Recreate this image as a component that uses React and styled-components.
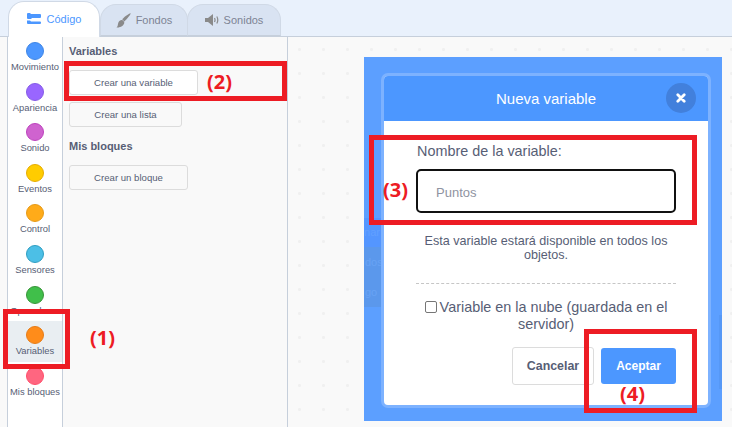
import React from 'react';
import styled, { createGlobalStyle } from 'styled-components';

const Global = createGlobalStyle`
  html, body { margin: 0; padding: 0; width: 732px; height: 427px; overflow: hidden; background: #f9f9f9; }
  * { box-sizing: border-box; }
  #root { font-family: "Liberation Sans", Arial, sans-serif; color: #575e75; }
`;

const Page = styled.div`
  position: relative;
  width: 732px;
  height: 427px;
  display: flex;
  flex-direction: column;
  overflow: hidden;
`;

const TabBar = styled.div`
  height: 37px;
  flex: none;
  display: flex;
  align-items: flex-end;
  padding-left: 8px;
  background: #e9f1fc;
  border-bottom: 1px solid #c6cfdb;
`;

const Tab = styled.div`
  height: ${p => (p.$active ? 36 : 32)}px;
  width: ${p => p.$w}px;
  margin-left: ${p => p.$ml || 0}px;
  margin-bottom: ${p => (p.$active ? -1 : 0)}px;
  display: flex;
  align-items: center;
  justify-content: center;
  gap: ${p => p.$gap}px;
  padding-bottom: ${p => (p.$active ? 2 : 0)}px;
  font-size: 11px;
  color: ${p => (p.$active ? '#4c97ff' : '#7d8494')};
  background: ${p => (p.$active ? '#fff' : '#d9e3f2')};
  border: 1px solid #d0d9e6;
  border-bottom: ${p => (p.$active ? 'none' : '1px solid #c6cfdb')};
  border-radius: 16px 16px 0 0;
  z-index: ${p => (p.$active ? 2 : 1)};
`;

const Main = styled.div`
  flex: 1;
  display: flex;
  min-height: 0;
  padding-left: 7px;
`;

const Categories = styled.div`
  width: 56px;
  flex: none;
  background: #fff;
  border-left: 1px solid #c6cfdb;
  border-right: 1px solid #c6cfdb;
  display: flex;
  flex-direction: column;
`;

const Category = styled.div`
  height: 40.6px;
  flex: none;
  display: flex;
  flex-direction: column;
  align-items: center;
  padding-top: 5px;
  font-size: 9.4px;
  line-height: 12px;
  white-space: nowrap;
  background: ${p => (p.$selected ? '#e9eef2' : 'transparent')};
`;

const Dot = styled.span`
  width: 18px;
  height: 18px;
  flex: none;
  margin-bottom: 1px;
  border-radius: 50%;
  background: ${p => p.$color};
  border: 1px solid ${p => p.$edge};
`;

const Palette = styled.div`
  width: 225px;
  flex: none;
  background: #f9f9f9;
  border-right: 1px solid #c6cfdb;
  display: flex;
  flex-direction: column;
  align-items: flex-start;
  padding: 8px 0 0 6px;
`;

const Heading = styled.div`
  font-size: 11px;
  font-weight: bold;
  line-height: 13px;
  margin-bottom: ${p => p.$mb}px;
`;

const PaletteButton = styled.div`
  width: ${p => p.$w}px;
  height: 25px;
  margin-bottom: ${p => p.$mb}px;
  display: flex;
  align-items: center;
  justify-content: center;
  font-size: 9.6px;
  background: ${p => (p.$white ? '#fff' : '#f9f9f9')};
  border: 1px solid #dcdcdc;
  border-radius: 3px;
`;

const Workspace = styled.div`
  flex: 1;
  background-color: #f9f9f9;
  background-image: radial-gradient(circle at 11.5px 12.5px, #f0f0f0 1.2px, transparent 1.7px);
  background-size: 24px 24px;
`;

const Overlay = styled.div`
  position: absolute;
  left: 364px;
  top: 57px;
  width: 358px;
  height: 364px;
  background: #5c9fff;
  padding: 16px 0 0 17px;
`;

const Ghost = styled.div`
  position: absolute;
  left: 0;
  top: ${p => p.$top}px;
  width: 18px;
  height: ${p => p.$h}px;
  background: ${p => p.$bg};
  color: ${p => p.$fg};
  font-size: 11px;
  line-height: ${p => p.$h}px;
  text-indent: ${p => p.$indent}px;
  overflow: hidden;
  white-space: nowrap;
`;

const SideShade = styled.div`
  position: absolute;
  right: 0;
  top: 258px;
  width: 3px;
  height: 74px;
  background: #5698f6;
`;

const Modal = styled.div`
  position: relative;
  width: 330px;
  height: 335px;
  border: 3px solid #7db2ff;
  border-radius: 7px;
  background: #fff;
  overflow: hidden;
  display: flex;
  flex-direction: column;
`;

const ModalHeader = styled.div`
  height: 45px;
  flex: none;
  position: relative;
  background: #4c97ff;
  color: #fff;
  font-size: 15px;
  display: flex;
  align-items: center;
  justify-content: center;
`;

const Close = styled.div`
  position: absolute;
  right: 12px;
  top: 7px;
  width: 30px;
  height: 30px;
  border-radius: 50%;
  background: #4280dc;
  display: flex;
  align-items: center;
  justify-content: center;
`;

const ModalBody = styled.div`
  flex: 1;
  display: flex;
  flex-direction: column;
  padding: 21px 32px 0;
  position: relative;
`;

const FieldLabel = styled.div`
  font-size: 14.4px;
  line-height: 18px;
  margin-bottom: 9px;
  padding-left: 1px;
`;

const Input = styled.div`
  height: 44px;
  border: 2px solid #111;
  border-radius: 5px;
  padding: 2px 0 0 18px;
  display: flex;
  align-items: center;
  font-size: 13px;
  color: #8f93a1;
`;

const Help = styled.div`
  font-size: 12.6px;
  line-height: 14px;
  text-align: center;
  margin: 21px -2px 0;
`;

const Divider = styled.div`
  border-top: 1px dashed #c6c6c6;
  margin-top: 21px;
`;

const Cloud = styled.div`
  font-size: 14.4px;
  line-height: 17px;
  text-align: center;
  margin-top: 15px;
`;

const Box = styled.span`
  display: inline-block;
  width: 12px;
  height: 12px;
  margin: 0 3px 0 0;
  vertical-align: -1px;
  border: 1px solid #767676;
  border-radius: 2px;
  background: #fff;
`;

const Actions = styled.div`
  display: flex;
  justify-content: flex-end;
  align-items: center;
  gap: 7px;
  margin-top: 14px;
`;

const Cancel = styled.div`
  width: 82px;
  height: 38px;
  display: flex;
  align-items: center;
  justify-content: center;
  font-size: 12.4px;
  font-weight: bold;
  background: #fff;
  border: 1px solid #dcdcdc;
  border-radius: 3px;
`;

const Accept = styled.div`
  width: 75px;
  height: 36px;
  display: flex;
  align-items: center;
  justify-content: center;
  font-size: 12px;
  font-weight: bold;
  color: #fff;
  background: #4c97ff;
  border-radius: 3px;
`;

const Mark = styled.div`
  position: absolute;
  left: ${p => p.$x}px;
  top: ${p => p.$y}px;
  width: ${p => p.$w}px;
  height: ${p => p.$h}px;
  border: 5px solid #ed1c24;
`;

const MarkLabel = styled.div`
  position: absolute;
  left: ${p => p.$x}px;
  top: ${p => p.$y}px;
  font-family: "Open Sans", sans-serif;
  font-size: 20px;
  font-weight: bold;
  line-height: 26px;
  color: #ed1c24;
`;

const CodeIcon = () => (
  <svg width="14" height="11" viewBox="0 0 14 11">
    <path fill="#4c97ff" d="M0 1a1 1 0 0 1 1-1h2l1 1h9a1 1 0 0 1 1 1v2a1 1 0 0 1-1 1H5L4 6H1a1 1 0 0 1-1-1z" />
    <path fill="#4c97ff" d="M0 7.500h3l1 1h9a1 1 0 0 1 1 1v.5a1 1 0 0 1-1 1H1a1 1 0 0 1-1-1z" />
  </svg>
);

const BrushIcon = () => (
  <svg width="15" height="15" viewBox="0 0 15 15">
    <path fill="#8a8a8a" d="M14.600.4c.5.5-3.200 5.400-6.200 8L6.200 6.300C8.900 3.400 14 0 14.600.4z" />
    <path fill="#8a8a8a" d="M5.600 7c1.600.3 2.600 1.300 2.700 2.800-.5 2.800-3.400 5-7.800 4.700 1.700-1 1-3 1.900-5 .6-1.400 1.900-2.400 3.200-2.500z" />
  </svg>
);

const SoundIcon = () => (
  <svg width="14" height="12" viewBox="0 0 14 12">
    <path fill="#8a8a8a" d="M0 4h3l5-4v12L3 8H0z" />
    <path fill="none" stroke="#8a8a8a" strokeWidth="1.200" d="M9.500 4c.7 1.300.7 2.700 0 4M11.800 2.500c1.300 2.300 1.300 4.700 0 7" />
  </svg>
);

const XIcon = () => (
  <svg width="10" height="10" viewBox="0 0 10 10">
    <path stroke="#fff" strokeWidth="2.800" strokeLinecap="round" d="M1.800 1.800l6.400 6.400M8.200 1.800L1.800 8.200" />
  </svg>
);

const cats = [
  ['Movimiento', '#4c97ff', '#3f86e6'],
  ['Apariencia', '#9966ff', '#855ce6'],
  ['Sonido', '#cf63cf', '#bd42bd'],
  ['Eventos', '#ffcc00', '#e6ac00'],
  ['Control', '#ffab19', '#e69a17'],
  ['Sensores', '#4cbfe6', '#2e9ec2'],
  ['Operadores', '#40bf4a', '#389438'],
  ['Variables', '#ff8c1a', '#e67c17'],
  ['Mis bloques', '#ff6680', '#ff4d6a'],
];

export default function App() {
  return (
    <Page>
      <Global />
      <TabBar>
        <Tab $active $w={92} $gap={6}><CodeIcon />Código</Tab>
        <Tab $w={88} $gap={5}><BrushIcon />Fondos</Tab>
        <Tab $w={94} $ml={-1} $gap={5}><SoundIcon />Sonidos</Tab>
      </TabBar>
      <Main>
        <Categories>
          {cats.map(([name, c, e]) => (
            <Category key={name} $selected={name === 'Variables'}>
              <Dot $color={c} $edge={e} />
              {name}
            </Category>
          ))}
        </Categories>
        <Palette>
          <Heading $mb={12}>Variables</Heading>
          <PaletteButton $w={129} $white $mb={7}>Crear una variable</PaletteButton>
          <PaletteButton $w={113} $mb={13}>Crear una lista</PaletteButton>
          <Heading $mb={12}>Mis bloques</Heading>
          <PaletteButton $w={119}>Crear un bloque</PaletteButton>
        </Palette>
        <Workspace />
      </Main>
      <Overlay>
        <Ghost $top={161} $h={29} $bg="#5496ff" $fg="#62a0ff" $indent={-6}>enar</Ghost>
        <Ghost $top={190} $h={30} $bg="#5b98ec" $fg="#68a3f5" $indent={1}>dos</Ghost>
        <Ghost $top={220} $h={30} $bg="#5b98ec" $fg="#68a3f5" $indent={1}>go</Ghost>
        <SideShade />
        <Modal>
          <ModalHeader>
            Nueva variable
            <Close><XIcon /></Close>
          </ModalHeader>
          <ModalBody>
            <FieldLabel>Nombre de la variable:</FieldLabel>
            <Input>Puntos</Input>
            <Help>Esta variable estará disponible en todos los objetos.</Help>
            <Divider />
            <Cloud><Box />Variable en la nube (guardada en el servidor)</Cloud>
            <Actions>
              <Cancel>Cancelar</Cancel>
              <Accept>Aceptar</Accept>
            </Actions>
          </ModalBody>
        </Modal>
      </Overlay>
      <Mark $x={3} $y={309} $w={67} $h={60} />
      <Mark $x={64} $y={61} $w={223} $h={40} />
      <Mark $x={369} $y={135} $w={328} $h={90} />
      <Mark $x={584} $y={329} $w={113} $h={84} />
      <MarkLabel $x={90} $y={325}>(1)</MarkLabel>
      <MarkLabel $x={207} $y={69}>(2)</MarkLabel>
      <MarkLabel $x={383} $y={177}>(3)</MarkLabel>
      <MarkLabel $x={620} $y={381}>(4)</MarkLabel>
    </Page>
  );
}
